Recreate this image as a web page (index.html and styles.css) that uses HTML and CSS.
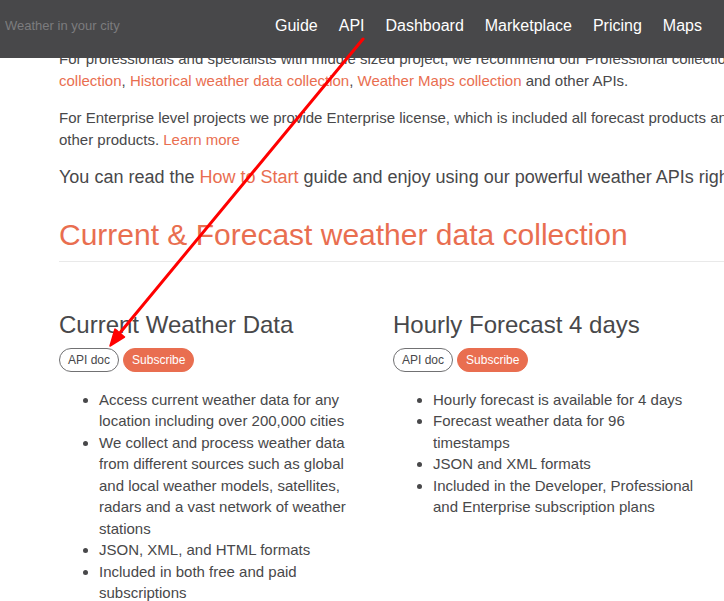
FILE: index.html
```html
<!DOCTYPE html>
<html lang="en">
<head>
<meta charset="utf-8">
<title>Weather API</title>
<link rel="stylesheet" href="styles.css">
</head>
<body>
<header class="topbar">
  <div class="search"><input class="search-input" type="text" placeholder="Weather in your city"></div>
  <nav class="nav">
    <a class="nav-link" href="#">Guide</a>
    <a class="nav-link" href="#">API</a>
    <a class="nav-link" href="#">Dashboard</a>
    <a class="nav-link" href="#">Marketplace</a>
    <a class="nav-link" href="#">Pricing</a>
    <a class="nav-link" href="#">Maps</a>
  </nav>
</header>

<main class="container">
  <p class="text">For professionals and specialists with middle sized project, we recommend our Professional collections: Current weather and forecasts<br><a class="link" href="#">collection</a>, <a class="link" href="#">Historical weather data collection</a>, <a class="link" href="#">Weather Maps collection</a> and other APIs.</p>
  <p class="text">For Enterprise level projects we provide Enterprise license, which is included all forecast products and historical products and<br>other products. <a class="link" href="#">Learn more</a></p>
  <p class="lead">You can read the <a class="link" href="#">How to Start</a> guide and enjoy using our powerful weather APIs right now.</p>

  <h2 class="section-title">Current &amp; Forecast weather data collection</h2>

  <div class="products">
    <section class="product">
      <h3 class="product-title">Current Weather Data</h3>
      <div class="actions">
        <a class="btn btn-outline" href="#">API doc</a>
        <a class="btn btn-fill" href="#">Subscribe</a>
      </div>
      <ul class="features">
        <li>Access current weather data for any location including over 200,000 cities</li>
        <li>We collect and process weather data from different sources such as global and local weather models, satellites, radars and a vast network of weather stations</li>
        <li>JSON, XML, and HTML formats</li>
        <li>Included in both free and paid subscriptions</li>
      </ul>
    </section>
    <section class="product">
      <h3 class="product-title">Hourly Forecast 4 days</h3>
      <div class="actions">
        <a class="btn btn-outline" href="#">API doc</a>
        <a class="btn btn-fill" href="#">Subscribe</a>
      </div>
      <ul class="features">
        <li>Hourly forecast is available for 4 days</li>
        <li>Forecast weather data for 96 timestamps</li>
        <li>JSON and XML formats</li>
        <li>Included in the Developer, Professional and Enterprise subscription plans</li>
      </ul>
    </section>
  </div>
</main>

<svg class="annotation" width="724" height="601" viewBox="0 0 724 601" aria-hidden="true">
  <line x1="363" y1="39" x2="119" y2="334" stroke="#ff0000" stroke-width="3" stroke-linecap="round"/>
  <polygon points="110,346 124.5,337 115,329" fill="#ff0000" stroke="#ff0000" stroke-width="1.5" stroke-linejoin="round"/>
</svg>
</body>
</html>
```

FILE: styles.css
```css
html, body {
  margin: 0;
  padding: 0;
  overflow: hidden;
}

body {
  font-family: "Liberation Sans", Arial, Helvetica, sans-serif;
  color: #48484a;
  background: #ffffff;
  width: 724px;
  height: 601px;
}

a {
  text-decoration: none;
}

.topbar {
  position: fixed;
  top: 0;
  left: 0;
  right: 0;
  height: 58px;
  background: #48484a;
  display: flex;
  align-items: flex-start;
  padding-top: 14px;
  box-sizing: border-box;
  z-index: 10;
  white-space: nowrap;
}

.search {
  width: 275px;
  flex: none;
  padding-left: 5px;
  box-sizing: border-box;
}

.search-input {
  display: block;
  width: 220px;
  border: 0;
  outline: 0;
  padding: 0;
  margin: 0;
  background: transparent;
  font-family: "Liberation Sans", Arial, sans-serif;
  font-size: 13px;
  line-height: 24px;
  height: 24px;
  color: #ffffff;
}

.search-input::placeholder {
  color: #7c7c7e;
}

.nav {
  display: flex;
  gap: 21px;
  flex: none;
}

.nav-link {
  color: #ffffff;
  font-size: 16px;
  line-height: 24px;
}

.container {
  width: 1140px;
  padding: 48px 0 0 59px;
}

.text {
  font-size: 15px;
  line-height: 22px;
  margin: 0 0 15px;
  white-space: nowrap;
}

.lead {
  font-size: 18px;
  line-height: 22px;
  margin: 0;
  white-space: nowrap;
}

.link {
  color: #e96e50;
}

.section-title {
  color: #e96e50;
  font-size: 30px;
  font-weight: normal;
  line-height: 33px;
  margin: 30px 0 0;
  padding-bottom: 10px;
  border-bottom: 1px solid #e9e9e9;
}

.products {
  display: grid;
  grid-template-columns: 334px 334px;
  margin-top: 50px;
}

.product {
  padding-right: 30px;
}

.product-title {
  font-size: 24px;
  font-weight: normal;
  line-height: 26px;
  margin: 0;
}

.actions {
  display: flex;
  gap: 4px;
  margin-top: 10px;
}

.btn {
  display: block;
  font-size: 12px;
  line-height: 22px;
  padding: 0 8px;
  border-radius: 12px;
  border: 1px solid transparent;
}

.btn-outline {
  color: #48484a;
  border-color: #717173;
}

.btn-fill {
  color: #ffffff;
  background: #e96e50;
  border-color: #e96e50;
}

.features {
  margin: 17px 0 0;
  padding-left: 40px;
  font-size: 15px;
  line-height: 21.45px;
}

.annotation {
  position: fixed;
  top: 0;
  left: 0;
  z-index: 20;
  pointer-events: none;
}
```
